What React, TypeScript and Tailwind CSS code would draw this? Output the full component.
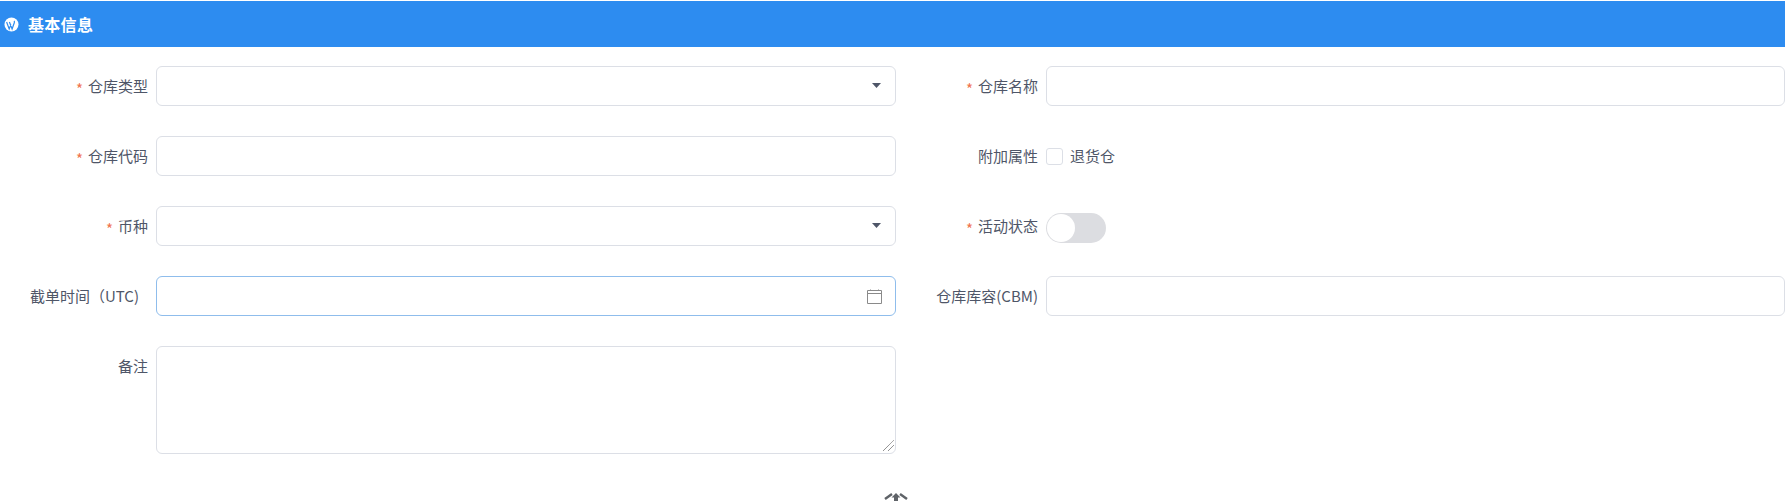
import React from "react";

const labelClass = "h-10 w-[148px] shrink-0 text-right text-[15px] leading-[40px] text-[#4f5668] whitespace-nowrap";
const inputClass = "block h-10 w-full rounded-[6px] border border-[#dcdfe6] bg-white outline-none";

const Label = ({ text, required, width }: { text: string; required?: boolean; width?: string }) => (
  <label className={`${labelClass} ${width || ""}`}>
    {required && <span className="mr-[5px] align-[-3px] text-[15px] leading-none text-[#f0734f]">*</span>}
    {text}
  </label>
);

const Caret = () => (
  <svg className="absolute right-[15px] top-[17px]" width="9" height="5" viewBox="0 0 9 5">
    <path d="M0 0h9L4.5 5z" fill="#4f5668" />
  </svg>
);

const SelectBox = () => (
  <div className="relative w-full">
    <input className={inputClass} readOnly />
    <Caret />
  </div>
);

const WpIcon = () => (
  <svg width="15" height="15" viewBox="0 0 15 15">
    <circle cx="7.5" cy="7.5" r="7" fill="#fff" />
    <path d="M2.6 5l2.6 7 1.7-4.6M5.4 5l2.7 7 2.2-6.2c.4-1 .1-1.6-.3-2" fill="none" stroke="#2d8cf0" strokeWidth="1.2" />
  </svg>
);

export default function App() {
  return (
    <div className="h-[501px] w-full overflow-hidden bg-white font-['Noto_Sans_CJK_SC','Liberation_Sans',sans-serif]">
      <div className="mt-px flex h-[46px] items-center bg-[#2d8cf0] pl-1 text-white">
        <WpIcon />
        <span className="ml-[9px] text-[16px] font-bold tracking-[0.3px]">基本信息</span>
      </div>

      <div className="grid grid-cols-[896px_1fr] gap-y-[30px] pt-[19px]">
        <div className="flex">
          <Label text="仓库类型" required />
          <div className="ml-2 w-[740px]">
            <SelectBox />
          </div>
        </div>
        <div className="flex">
          <Label text="仓库名称" required width="!w-[142px]" />
          <div className="ml-2 flex-1">
            <input className={inputClass} />
          </div>
        </div>

        <div className="flex">
          <Label text="仓库代码" required />
          <div className="ml-2 w-[740px]">
            <input className={inputClass} />
          </div>
        </div>
        <div className="flex">
          <Label text="附加属性" width="!w-[142px]" />
          <div className="ml-2 flex h-10 items-center">
            <span className="h-[17px] w-[17px] rounded-[3px] border border-[#dcdfe6] bg-white" />
            <span className="ml-[7px] text-[15px] text-[#4f5668]">退货仓</span>
          </div>
        </div>

        <div className="flex">
          <Label text="币种" required />
          <div className="ml-2 w-[740px]">
            <SelectBox />
          </div>
        </div>
        <div className="flex">
          <Label text="活动状态" required width="!w-[142px]" />
          <div className="ml-2 flex h-10 items-center">
            <div className="mt-[3px] flex h-[30px] w-[60px] items-center rounded-full bg-[#dcdde1] pl-px">
              <span className="h-[28px] w-[28px] rounded-full bg-white" />
            </div>
          </div>
        </div>

        <div className="flex">
          <Label text="截单时间（UTC)" width="pr-[9px]" />
          <div className="relative ml-2 w-[740px]">
            <input className={`${inputClass} !border-[#8fbdec]`} />
            <svg className="absolute right-[14px] top-[13px]" width="15" height="15" viewBox="0 0 15 15" fill="none" stroke="#8a8a8a">
              <path d="M.5 1.5h14v13H.5zM.5 4.5h14M3.5 .5v1M11.5 .5v1" />
            </svg>
          </div>
        </div>
        <div className="flex">
          <Label text="仓库库容(CBM)" width="!w-[142px]" />
          <div className="ml-2 flex-1">
            <input className={inputClass} />
          </div>
        </div>

        <div className="flex">
          <Label text="备注" />
          <div className="relative ml-2 w-[740px]">
            <textarea className="block h-[108px] w-full resize-none rounded-[6px] border border-[#dcdfe6] bg-white outline-none" />
            <svg className="absolute bottom-[3px] right-[2px]" width="11" height="11" viewBox="0 0 11 11" fill="none" stroke="#666" strokeDasharray="1 0.5">
              <path d="M0 11L11 0M5 11l6-6" />
            </svg>
          </div>
        </div>
      </div>

      <div className="mt-[38px] flex justify-center pl-[7px]">
        <svg width="24" height="20" viewBox="0 0 24 20" fill="none" stroke="#5f6368" strokeWidth="2.5">
          <path d="M1 7l7-5M23 7l-7-5" />
          <path d="M12 1l4.5 4.5h-2.5v4h-4v-4H7.5z" fill="#5f6368" stroke="none" />
        </svg>
      </div>
    </div>
  );
}
